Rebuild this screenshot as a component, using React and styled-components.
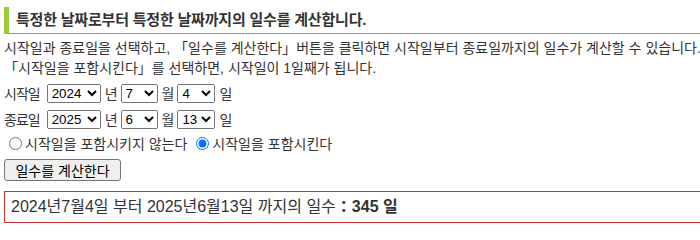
import React, { useState } from "react";
import styled, { createGlobalStyle } from "styled-components";

const Global = createGlobalStyle`
  html, body { margin: 0; padding: 0; background: #fff; }
  body {
    font-family: "Liberation Sans", "Noto Sans CJK KR", sans-serif;
    color: #333;
    font-size: 14px;
  }
`;

const Page = styled.div`
  padding: 7px 0 0 4px;
  overflow: hidden;
  width: 696px;
`;

const Heading = styled.h2`
  margin: 0;
  height: 26px;
  line-height: 26px;
  font-size: 15px;
  letter-spacing: -0.2px;
  font-weight: bold;
  color: #333;
  border-left: 5px solid #99cc33;
  border-bottom: 1px solid #999;
  padding-left: 7px;
  white-space: nowrap;
`;

const Intro = styled.p`
  margin: 4px 0 2px;
  line-height: 20px;
  font-size: 14px;
  white-space: nowrap;
`;

const DateRow = styled.div`
  display: flex;
  align-items: center;
  height: 26px;
  gap: 4px;
  font-size: 14px;
`;

const Word = styled.span`
  letter-spacing: -1px;
`;

const RowLabel = styled(Word)`
  margin-right: 3px;
`;

const Select = styled.select`
  width: ${(p) => p.$w}px;
  height: 19px;
  font-family: "Liberation Sans", Arial, sans-serif;
  font-size: 13.33px;
  color: #000;
  padding: 0;
`;

const RadioRow = styled.div`
  display: flex;
  align-items: center;
  height: 22px;
  font-size: 14px;
`;

const RadioLabel = styled.label`
  display: inline-flex;
  align-items: center;
  margin-right: 4px;
  input { margin: 0 3px 0 5px; width: 13px; height: 13px; }
`;

const Button = styled.button`
  margin-top: 5px;
  height: 22px;
  width: 117px;
  padding: 0 6px;
  font-family: "Liberation Sans", "Noto Sans CJK KR", sans-serif;
  font-size: 14px;
  color: #000;
  background: #efefef;
  border: 1px solid #767676;
  border-radius: 3px;
`;

const Result = styled.div`
  margin-top: 10px;
  height: 30px;
  line-height: 30px;
  border: 1px solid #cc3333;
  border-right: none;
  padding-left: 6px;
  font-size: 16px;
  white-space: nowrap;
  b { font-weight: bold; }
`;

const range = (a, b) => Array.from({ length: b - a + 1 }, (_, i) => a + i);
const years = range(2000, 2050);
const months = range(1, 12);
const days = range(1, 31);

function DatePick({ label, y, m, d }) {
  return (
    <DateRow>
      <RowLabel>{label}</RowLabel>
      <Select $w={54} defaultValue={y}>
        {years.map((v) => <option key={v} value={v}>{v}</option>)}
      </Select>
      <Word>년</Word>
      <Select $w={37} defaultValue={m}>
        {months.map((v) => <option key={v} value={v}>{v}</option>)}
      </Select>
      <Word>월</Word>
      <Select $w={38} defaultValue={d}>
        {days.map((v) => <option key={v} value={v}>{v}</option>)}
      </Select>
      <Word>일</Word>
    </DateRow>
  );
}

export default function App() {
  const [inc, setInc] = useState("1");
  return (
    <>
      <Global />
      <Page>
        <Heading>특정한 날짜로부터 특정한 날짜까지의 일수를 계산합니다.</Heading>
        <Intro>
          시작일과 종료일을 선택하고, 「일수를 계산한다」버튼을 클릭하면 시작일부터 종료일까지의 일수가 계산할 수 있습니다.
          <br />
          「시작일을 포함시킨다」를 선택하면, 시작일이 1일째가 됩니다.
        </Intro>
        <DatePick label="시작일" y={2024} m={7} d={4} />
        <DatePick label="종료일" y={2025} m={6} d={13} />
        <RadioRow>
          <RadioLabel>
            <input type="radio" name="inc" value="0" checked={inc === "0"} onChange={() => setInc("0")} />
            시작일을 포함시키지 않는다
          </RadioLabel>
          <RadioLabel>
            <input type="radio" name="inc" value="1" checked={inc === "1"} onChange={() => setInc("1")} />
            시작일을 포함시킨다
          </RadioLabel>
        </RadioRow>
        <Button>일수를 계산한다</Button>
        <Result>
          2024년7월4일 부터 2025년6월13일 까지의 일수<b>：345 일</b>
        </Result>
      </Page>
    </>
  );
}
